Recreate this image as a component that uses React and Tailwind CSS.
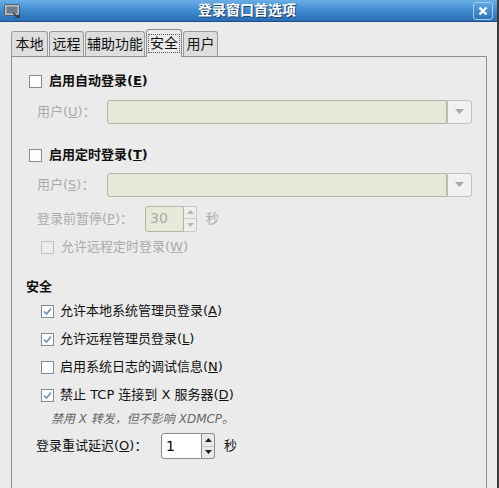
import React from "react";

const font = { fontFamily: '"DejaVu Sans", "Noto Sans CJK SC", sans-serif' };

const Mn = ({ k }) => (
  <>
    (<span className="underline">{k}</span>)
  </>
);

const Check = ({ checked, disabled }) => (
  <span
    className={`w-[13px] h-[13px] border flex items-center justify-center shrink-0 ${
      disabled ? "border-[#c4c4c4] bg-[#ececec]" : "border-[#7f8b95] bg-white"
    }`}
  >
    {checked && (
      <svg width="11" height="11" viewBox="0 0 11 11">
        <path d="M2 5.5 L4.5 8 L9 2.5" fill="none" stroke="#6d8fae" strokeWidth="1.6" />
      </svg>
    )}
  </span>
);

const Combo = () => (
  <div className="flex h-[24px] w-[365px] ml-auto mr-[14px]">
    <div className="flex-1 bg-[#e8e8d9] border border-[#b5b5a5] rounded-l-[3px]" />
    <div className="w-[25px] bg-[#f1f1f1] border border-[#c1c1c1] rounded-r-[3px] flex items-center justify-center">
      <svg width="9" height="6" viewBox="0 0 9 6">
        <path d="M0 0 H9 L4.5 5 Z" fill="#a9a9a9" />
      </svg>
    </div>
  </div>
);

const Spin = ({ value, disabled, width }) => (
  <div className={`flex h-[26px] ${width}`}>
    <div
      className={`flex-1 flex items-center pl-[4px] text-[14px] border rounded-l-[3px] ${
        disabled ? "bg-[#e8e8d9] border-[#b5b5a5] text-[#ababab]" : "bg-white border-[#8a8a8a] text-black"
      }`}
    >
      {value}
    </div>
    <div
      className={`w-[13px] flex flex-col border border-l-0 rounded-r-[3px] ${
        disabled ? "border-[#c8c8c8] bg-[#eeeeee]" : "border-[#8a8a8a] bg-[#e9e9e9]"
      }`}
    >
      <div className="flex-1 flex items-center justify-center border-b border-[#c8c8c8]">
        <svg width="7" height="4" viewBox="0 0 7 4">
          <path d="M0 4 L3.5 0 L7 4 Z" fill={disabled ? "#b4b4b4" : "#222"} />
        </svg>
      </div>
      <div className="flex-1 flex items-center justify-center">
        <svg width="7" height="4" viewBox="0 0 7 4">
          <path d="M0 0 L3.5 4 L7 0 Z" fill={disabled ? "#b4b4b4" : "#222"} />
        </svg>
      </div>
    </div>
  </div>
);

const tabs = [
  { name: "本地", w: "w-[37px]" },
  { name: "远程", w: "w-[35px]" },
  { name: "辅助功能", w: "w-[60px]" },
  { name: "安全", w: "w-[36px]", active: true },
  { name: "用户", w: "w-[35px]" },
];

const secItems = [
  { text: "允许本地系统管理员登录", k: "A", checked: true },
  { text: "允许远程管理员登录", k: "L", checked: true },
  { text: "启用系统日志的调试信息", k: "N", checked: false },
  { text: "禁止 TCP 连接到 X 服务器", k: "D", checked: true },
];

export default function App() {
  return (
    <div
      className="w-[499px] h-[488px] bg-[#ebebeb] overflow-hidden flex flex-col border-r-2 border-[#3a3a3a] text-[13px] text-[#111]"
      style={font}
    >
      {/* title bar */}
      <div className="h-[22px] shrink-0 bg-gradient-to-b from-[#6aaee6] via-[#3f8bd0] to-[#2a6db5] border-b border-[#1f4f8a] flex items-center px-[4px]">
        <svg width="17" height="16" viewBox="0 0 17 16">
          <rect x="0.5" y="1.5" width="15" height="11" rx="1" fill="#b9c3cc" stroke="#4b5a66" />
          <rect x="2.5" y="3.5" width="11" height="7" fill="#6f7e8a" />
          <path d="M9 10 L15 14.5 M11 14.5 H15 V11" stroke="#2e3a44" strokeWidth="1.2" fill="none" />
        </svg>
        <div className="flex-1 text-center text-white font-bold text-[14px] [text-shadow:1px_1px_0_#1b3c66]">
          登录窗口首选项
        </div>
        <div className="w-[20px] h-[18px] rounded-[3px] border border-[#a7cdee] bg-gradient-to-b from-[#5ea6e3] to-[#2e72bb] flex items-center justify-center">
          <svg width="10" height="10" viewBox="0 0 10 10">
            <path d="M1.5 1.5 L8.5 8.5 M8.5 1.5 L1.5 8.5" stroke="white" strokeWidth="2.4" />
          </svg>
        </div>
      </div>

      {/* tabs */}
      <div className="flex items-end gap-[1px] pl-[11px] mt-[6px] h-[28px] shrink-0 relative z-10">
        {tabs.map((t) =>
          t.active ? (
            <div
              key={t.name}
              className={`${t.w} h-[28px] bg-[#ebebeb] border border-b-0 border-[#8e8e8e] rounded-t-[3px] flex items-center justify-center -mb-[1px]`}
            >
              <span className="outline outline-1 outline-dotted outline-[#555] px-[1px] leading-[17px] text-[14px]">
                {t.name}
              </span>
            </div>
          ) : (
            <div
              key={t.name}
              className={`${t.w} h-[25px] bg-[#dedede] border border-b-0 border-[#9a9a9a] rounded-t-[3px] flex items-center justify-center text-[14px]`}
            >
              {t.name}
            </div>
          )
        )}
      </div>

      {/* panel */}
      <div className="ml-[11px] w-[476px] flex-1 border border-[#8e8e8e] border-b-0 flex flex-col pl-[1px]">
        <div className="mt-[12px] h-[24px] flex items-center gap-[7px] pl-[16px] font-bold">
          <Check />
          <span>
            启用自动登录<Mn k="E" />
          </span>
        </div>
        <div className="mt-[7px] h-[24px] flex items-center pl-[24px] text-[#aaaaaa]">
          <span>
            用户<Mn k="U" />：
          </span>
          <Combo />
        </div>

        <div className="mt-[19px] h-[24px] flex items-center gap-[7px] pl-[16px] font-bold">
          <Check />
          <span>
            启用定时登录<Mn k="T" />
          </span>
        </div>
        <div className="mt-[6px] h-[24px] flex items-center pl-[24px] text-[#aaaaaa]">
          <span>
            用户<Mn k="S" />：
          </span>
          <Combo />
        </div>
        <div className="mt-[9px] h-[25px] flex items-center pl-[24px] text-[#aaaaaa]">
          <span className="w-[108px]">
            登录前暂停<Mn k="P" />：
          </span>
          <Spin value="30" disabled width="w-[52px]" />
          <span className="ml-[9px]">秒</span>
        </div>
        <div className="mt-[4px] h-[24px] flex items-center gap-[7px] pl-[28px] text-[#aaaaaa]">
          <Check disabled />
          <span>
            允许远程定时登录<Mn k="W" />
          </span>
        </div>

        <div className="mt-[18px] h-[20px] flex items-center pl-[13px] font-bold">安全</div>
        {secItems.map((it) => (
          <div key={it.k} className="h-[28px] flex items-center gap-[6px] pl-[28px]">
            <Check checked={it.checked} />
            <span>
              {it.text}
              <Mn k={it.k} />
            </span>
          </div>
        ))}
        <div className="h-[20px] flex items-center pl-[38px] italic text-[12px] text-[#666]">
          禁用 X 转发，但不影响 XDMCP。
        </div>
        <div className="mt-[4px] h-[26px] flex items-center pl-[23px]">
          <span className="w-[125px]">
            登录重试延迟<Mn k="O" />：
          </span>
          <Spin value="1" width="w-[54px]" />
          <span className="ml-[9px]">秒</span>
        </div>
      </div>
    </div>
  );
}
